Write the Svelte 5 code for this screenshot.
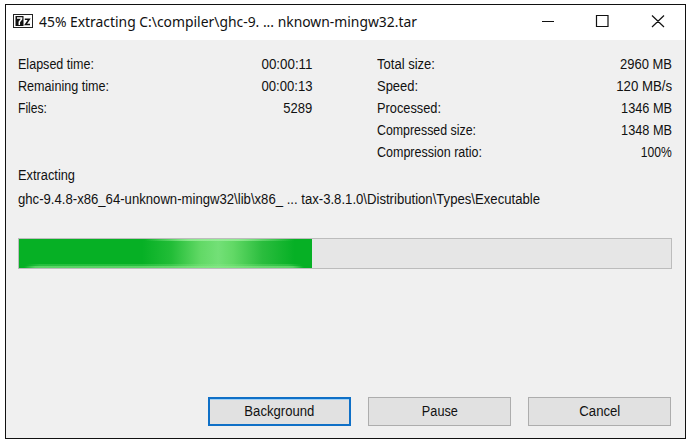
<script>
  const left = [
    ['Elapsed time:', 76, '00:00:11', 51],
    ['Remaining time:', 91, '00:00:13', 51],
    ['Files:', 29, '5289', 29]
  ];
  const right = [
    ['Total size:', 58, '2960 MB', 52],
    ['Speed:', 41, '120 MB/s', 56],
    ['Processed:', 64, '1346 MB', 51],
    ['Compressed size:', 99, '1348 MB', 51],
    ['Compression ratio:', 105, '100%', 31]
  ];
  const buttons = [['Background', 70], ['Pause', 36], ['Cancel', 41]];

  // Condenses a label horizontally to the given width.
  function fit(node, width) {
    node.style.transform = `scaleX(${width / node.getBoundingClientRect().width})`;
  }
</script>

{#snippet rows(list)}
  {#each list as [label, lw, value, vw]}
    <div class="row">
      <span class="t" use:fit={lw}>{label}</span>
      <span class="t end" use:fit={vw}>{value}</span>
    </div>
  {/each}
{/snippet}

<div class="desktop">
  <div class="window">
    <header>
      <svg class="logo" width="20" height="14" viewBox="0 0 20 14">
        <rect x="0.5" y="0.5" width="19" height="13" fill="#fff" stroke="#222" />
        <rect x="2.5" y="2" width="8" height="10" fill="#111" />
        <path d="M4 4H8.6V5L6.3 8V11" fill="none" stroke="#fff" stroke-width="1.5" />
        <path d="M11.8 5.2H16.2L12.6 10.5H17" fill="none" stroke="#111" stroke-width="1.6" />
      </svg>
      <h1><span class="t" use:fit={378}>45% Extracting C:\compiler\ghc-9. ... nknown-mingw32.tar</span></h1>
      <svg class="controls" width="124" height="16" viewBox="0 0 124 16">
        <path d="M0 7.5H12M54.5 1.5H66V12.5H54.5ZM110 1.5L122 13M122 1.5L110 13" fill="none" stroke="#111" stroke-width="1.2" />
      </svg>
    </header>
    <main>
      <div class="stats">
        <div class="col first">{@render rows(left)}</div>
        <div class="col second">{@render rows(right)}</div>
      </div>
      <div class="line status"><span class="t" use:fit={57}>Extracting</span></div>
      <div class="line path"><span class="t" use:fit={522}>ghc-9.4.8-x86_64-unknown-mingw32\lib\x86_ ... tax-3.8.1.0\Distribution\Types\Executable</span></div>
      <div class="progress"><div class="fill"></div></div>
      <footer>
        {#each buttons as [label, w], i}
          <button class:focused={i === 0}><span class="t mid" use:fit={w}>{label}</span></button>
        {/each}
      </footer>
    </main>
  </div>
</div>

<style>
  :global(body) { background: #fff; overflow: hidden; }
  .desktop {
    box-sizing: border-box;
    width: 692px;
    height: 443px;
    padding: 4px 6px 4px 5px;
    font: 14px/22px "Liberation Sans", Arial, sans-serif;
    color: #111;
  }
  .window {
    box-sizing: border-box;
    width: 681px;
    height: 435px;
    border: 1px solid #111;
    background: #f0f0f0;
    display: flex;
    flex-direction: column;
  }
  header {
    height: 35px;
    background: #fff;
    display: flex;
    align-items: flex-start;
    flex: none;
  }
  .logo { margin: 9px 0 0 7px; }
  h1 {
    margin: 5px 0 0 6px;
    width: 380px;
    font: 14.5px/22px "Noto Sans", sans-serif;
    white-space: nowrap;
  }
  .controls { margin: 9px 0 0 123px; }
  .t {
    display: inline-block;
    white-space: nowrap;
    transform-origin: left center;
  }
  .end { transform-origin: right center; }
  .mid { transform-origin: center; }
  main {
    flex: 1;
    padding: 13px 13px 12px 12px;
    display: flex;
    flex-direction: column;
  }
  .stats { display: flex; justify-content: space-between; }
  .first { width: 294px; }
  .second { width: 295px; }
  .row { display: flex; justify-content: space-between; height: 22px; }
  .line { height: 22px; white-space: nowrap; }
  .status { margin-top: 1px; }
  .path { margin-top: 2px; }
  .progress {
    box-sizing: border-box;
    height: 31px;
    margin-top: 28px;
    border: 1px solid #bcbcbc;
    background: #e6e6e6;
  }
  .fill {
    width: 293px;
    height: 29px;
    background:
      linear-gradient(90deg, transparent 43%, rgba(160, 240, 160, .75) 58%, rgba(160, 240, 160, .75) 75%, transparent 94%) top / 100% 2px no-repeat,
      linear-gradient(90deg, transparent, rgba(140, 235, 140, .5) 4% 96%, transparent) 5px 100% / 280px 2px no-repeat,
      linear-gradient(90deg, transparent, rgba(140, 235, 140, .25) 5% 95%, transparent) 7px 100% / 276px 4px no-repeat,
      linear-gradient(90deg, #06b025 0 42%, #22bd37 52%, #62d966 62%, #73e077 68%, #62d966 73%, #2bbd3e 83%, #06b025 94%);
  }
  footer {
    display: flex;
    gap: 17px;
    justify-content: flex-end;
    margin: auto 1px 0 0;
  }
  button {
    box-sizing: border-box;
    width: 143px;
    height: 29px;
    padding: 0;
    border: 1px solid #adadad;
    background: #e1e1e1;
    color: inherit;
    font: inherit;
    line-height: 25px;
  }
  .focused { border: 2px solid #0f70c7; box-shadow: inset 0 1px #9fd0f5; }
</style>
